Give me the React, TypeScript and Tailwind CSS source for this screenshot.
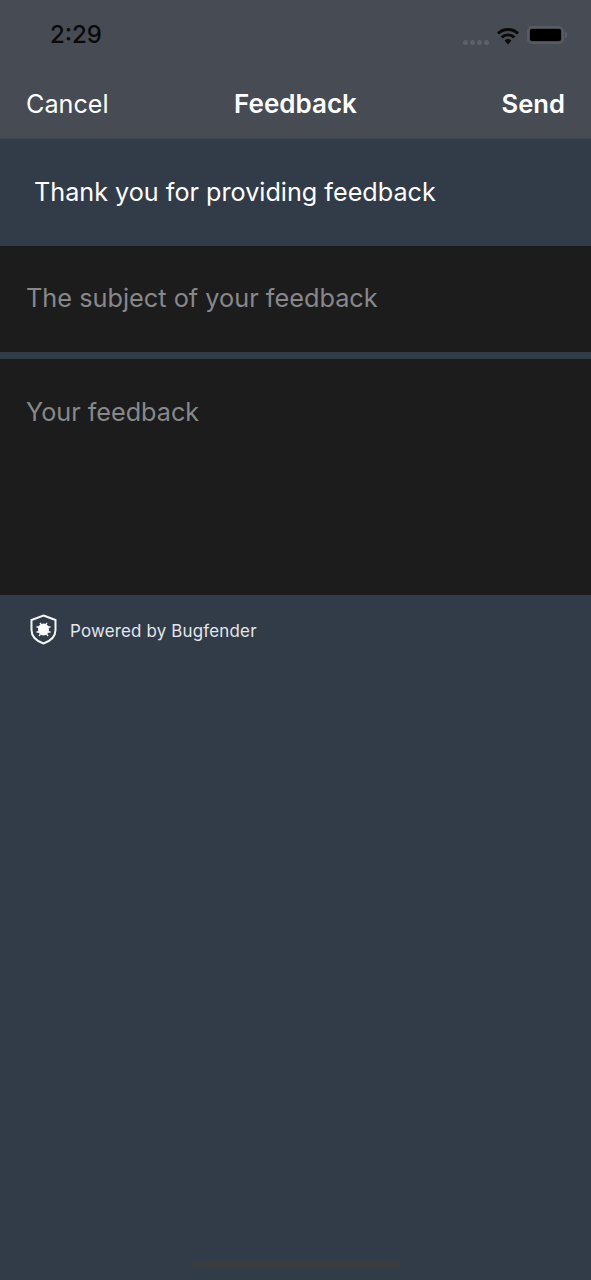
export default function App() {
  return (
    <div className="flex h-[1280px] w-[591px] flex-col overflow-hidden bg-[#323c48] font-['Inter',sans-serif] text-white">
      <header className="h-[139px] shrink-0 border-b border-[#3f4650] bg-[#474b54]">
        <div className="flex h-[70px] items-center justify-between pl-[50px] pr-[24px]">
          <span className="text-[24px] font-medium leading-none text-[#0a0a0a]">2:29</span>
          <div className="flex items-center">
            <div className="mr-[8px] mt-[14px] flex gap-[2px]">
              <span className="h-[5px] w-[5px] rounded-full bg-[#5c606a]" />
              <span className="h-[5px] w-[5px] rounded-full bg-[#5c606a]" />
              <span className="h-[5px] w-[5px] rounded-full bg-[#5c606a]" />
              <span className="h-[5px] w-[5px] rounded-full bg-[#5c606a]" />
            </div>
            <svg width="22" height="18" viewBox="0 0 22 18" className="mr-[8px] mt-[2px]">
              <path d="M1 6.5a14.5 14.5 0 0 1 20 0" fill="none" stroke="#0a0a0a" strokeWidth="2.8" />
              <path d="M4.6 10.4a9.5 9.5 0 0 1 12.8 0" fill="none" stroke="#0a0a0a" strokeWidth="2.8" />
              <path d="M7.6 13.5 11 17.4l3.4-3.9a5.2 5.2 0 0 0-6.8 0z" fill="#0a0a0a" />
            </svg>
            <div className="flex items-center">
              <div className="h-[18px] w-[37px] rounded-[5px] border-2 border-[#575b65] p-[1px]">
                <div className="h-full w-full rounded-[2px] bg-black" />
              </div>
              <div className="ml-[1px] h-[6px] w-[2px] rounded-r-sm bg-[#5c606a]" />
            </div>
          </div>
        </div>
        <div className="grid h-[68px] grid-cols-3 items-center px-[26px] pt-[2px]">
          <span className="text-[25.2px] leading-none">Cancel</span>
          <span className="-mt-[2px] whitespace-nowrap text-center text-[26px] font-semibold leading-none">Feedback</span>
          <span className="-mt-[2px] text-right text-[25.6px] font-semibold leading-none">Send</span>
        </div>
      </header>
      <div className="flex h-[106px] shrink-0 items-center pl-[34px] pt-[1px] text-[25.2px]">
        Thank you for providing feedback
      </div>
      <div className="mt-px flex h-[106px] shrink-0 items-center bg-[#1c1c1c] px-[26px] pb-[2px] text-[25.3px] text-[#88888a]">
        The subject of your feedback
      </div>
      <div className="mt-[7px] h-[236px] shrink-0 bg-[#1c1c1c] px-[26px] pt-[36px] text-[25.2px] leading-[34px] text-[#88888a]">
        Your feedback
      </div>
      <div className="flex h-[70px] shrink-0 items-center pl-[30px] pb-[1px]">
        <svg width="27" height="31" viewBox="0 0 27 31" className="shrink-0">
          <path d="M13.5 1.5 25.5 6v10c0 6.5-5 11-12 13.5C6.5 27 1.5 22.5 1.5 16V6z" fill="#323c48" stroke="#f4f5f6" strokeWidth="2" />
          <ellipse cx="13.5" cy="15.5" rx="5.5" ry="6" fill="#fff" />
          <path d="M10 9l1.5 2M17 9l-1.5 2M6.5 13h3M20.5 13h-3M6.5 18h3M20.5 18h-3M9 22l1.5-2M18 22l-1.5-2" stroke="#fff" strokeWidth="1.3" />
        </svg>
        <span className="ml-[13px] mt-[5px] text-[16.9px] tracking-[0.2px] text-[#e4e6e9]">Powered by Bugfender</span>
      </div>
      <div className="flex flex-1 flex-col justify-end pb-[12px]">
        <div className="mx-auto h-[7px] w-[210px] rounded-full bg-[#3a3b3d]" />
      </div>
    </div>
  );
}
